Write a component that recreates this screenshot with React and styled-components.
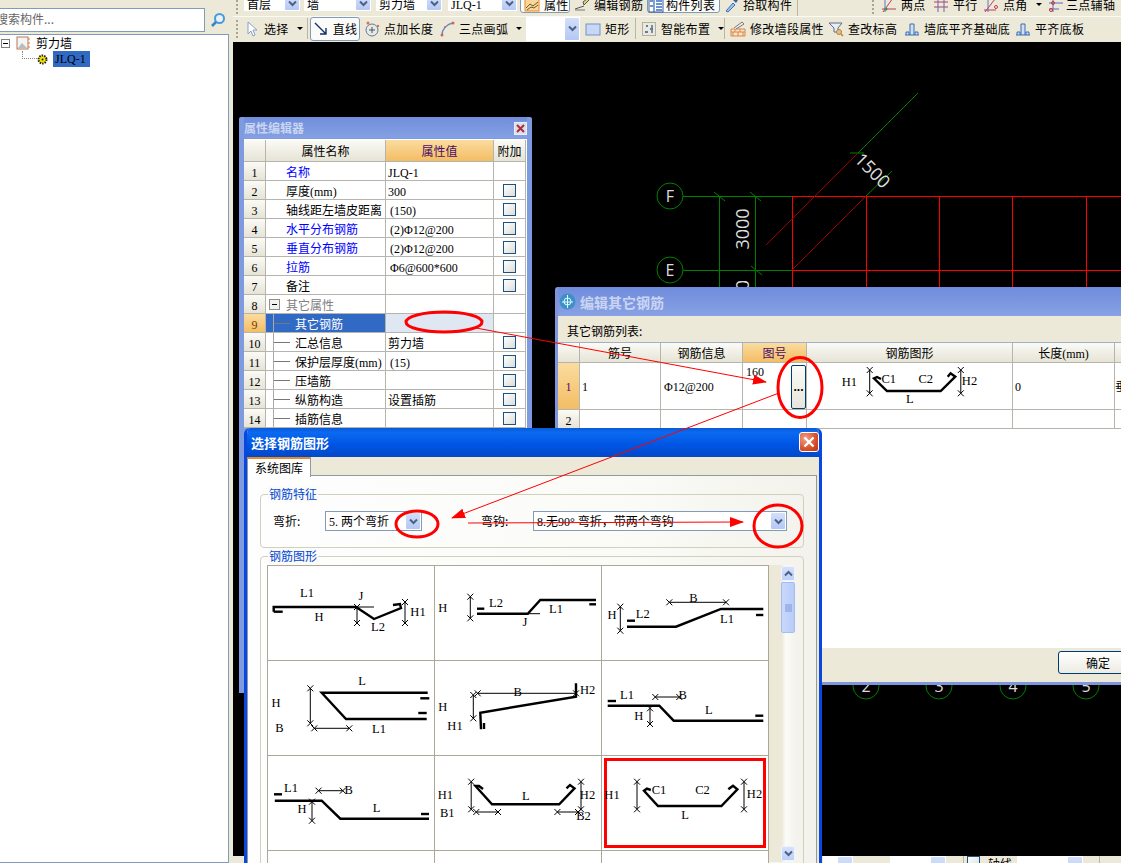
import React from "react";
import styled, { createGlobalStyle } from "styled-components";

const Global = createGlobalStyle`
  html, body { margin: 0; padding: 0; background: #ece9d8; overflow: hidden; }
  * { box-sizing: border-box; }
  #root { width: 1121px; height: 863px; }
`;

const CJK = `"Noto Sans CJK SC", "Liberation Sans", sans-serif`;
const LATIN = `"Liberation Serif", "Noto Sans CJK SC", serif`;

const Page = styled.div`
  position: relative; width: 1121px; height: 863px; overflow: hidden; display: flex;
  background: #ece9d8; font: 12px/16px ${CJK}; color: #000;
`;
const Mono = styled.span`font: 12px/16px ${LATIN};`;

/* ---------- left tree ---------- */
const Side = styled.aside`
  width: 233px; flex: none; display: flex; flex-direction: column; padding: 0 4px 0 0; background: #ece9d8;
`;
const SideTop = styled.div`height: 8px; flex: none;`;
const SearchRow = styled.div`height: 26px; flex: none; display: flex; gap: 2px;`;
const SearchBox = styled.div`
  width: 205px; height: 24px; background: #fff; border: 1px solid #7f9db9; border-left: 0;
  color: #666; font-size: 12px; line-height: 19px; white-space: nowrap; overflow: hidden; text-indent: -4px;
`;
const SearchBtn = styled.div`width: 22px; height: 24px; display: flex; align-items: center; justify-content: center;`;
const Tree = styled.div`flex: 1; background: #fff; border: 1px solid #7f9db9; border-left: 0;`;
const TreeRow = styled.div`display: flex; align-items: center; height: 16px; padding-left: ${p => p.$pad}px; gap: ${p => p.$gap}px;`;
const Minus = styled.span`
  width: 9px; height: 9px; border: 1px solid #7f7f7f; background: #fff; position: relative; flex: none;
  &::after { content: ""; position: absolute; left: 1px; right: 1px; top: 3px; height: 1px; background: #000; }
`;
const Dotted = styled.span`
  flex: none; width: 15px; height: 8px; margin-top: -8px; border-left: 1px dotted #888; border-bottom: 1px dotted #888;
`;
const TreeSel = styled.span`background: #316ac5; width: 37px; height: 16px; padding-left: 2px; margin-left: 5px; font: 12px/16px ${LATIN}; color: #000;`;

/* ---------- workspace ---------- */
const Work = styled.main`flex: 1; display: flex; flex-direction: column; min-width: 0;`;
const Bar = styled.div`
  flex: none; height: ${p => p.$h}px; display: flex; align-items: ${p => p.$align}; overflow: hidden; background: #ece9d8;
  padding-bottom: ${p => p.$pb || 0}px;
  border-bottom: ${p => (p.$line ? "1px solid #fbfaf4" : "0")};
`;
const Grip = styled.span`
  flex: none; width: 2px; height: 18px; margin-left: ${p => p.$ml}px;
  background: repeating-linear-gradient(to bottom, #a8a593 0 2px, transparent 2px 4px);
`;
const Sep = styled.span`flex: none; width: 1px; height: 21px; background: #b9b6a4; margin-left: ${p => p.$ml}px;`;
const ComboTop = styled.div`
  flex: none; width: ${p => p.$w}px; margin-left: ${p => p.$ml}px; margin-top: ${p => p.$mt || 0}px; height: ${p => p.$h || 24}px; background: #fff; position: relative;
  padding-left: 3px; line-height: ${p => p.$h || 24}px; white-space: nowrap; overflow: hidden;
`;
const Arrow = styled.span`
  position: absolute; right: 1px; top: 1px; bottom: 1px; width: 14px; background: linear-gradient(#d2dffb, #b4c8f4);
  display: flex; align-items: center; justify-content: center; border-radius: 1px;
`;
const Tool = styled.div`
  flex: none; width: ${p => p.$w}px; margin-left: ${p => p.$ml}px; margin-top: ${p => p.$mt || 0}px; height: ${p => p.$h || 24}px; display: flex; align-items: center;
  padding-left: ${p => p.$pl || 0}px;
  justify-content: ${p => (p.$center ? "center" : "flex-start")};
  gap: ${p => (p.$gap === undefined ? 4 : p.$gap)}px; white-space: nowrap; font-size: 12px; letter-spacing: 0.3px;
  ${p => p.$on && "background: #fbfbf9; border: 1px solid #7f9db9; border-radius: 3px;"}
`;
const Drop = styled.span`width: 0; height: 0; border: 3px solid transparent; border-top: 3px solid #000; border-bottom: 0; margin-left: 4px;`;
const Canvas = styled.div`flex: 1; min-height: 0; background: #000;`;
const CanvasSvg = styled.svg`display: block; width: 100%; height: 100%;`;
const Check = styled.span`
  display: block; flex: none; width: 13px; height: 13px; border: 1px solid #1c5180; background: linear-gradient(135deg, #fff, #dcdcd7);
  margin-left: ${p => p.$ml || 0}px;
`;
const BottomLabel = styled.span`flex: none; width: 37px; padding-left: 8px; line-height: 16px; white-space: nowrap;`;

/* ---------- windows ---------- */
const Win = styled.section`
  position: absolute; left: ${p => p.$x}px; top: ${p => p.$y}px; width: ${p => p.$w}px; height: ${p => p.$h}px;
  z-index: ${p => p.$z}; overflow: hidden; display: flex; flex-direction: column;
  background: ${p => p.$bg}; border: ${p => p.$bw}px solid ${p => p.$bc}; border-top: 0;
  border-radius: ${p => p.$r}px ${p => p.$r}px 0 0;
`;
const Title = styled.header`
  flex: none; height: ${p => p.$h}px; background: ${p => p.$bg}; color: ${p => p.$c}; display: flex; align-items: center;
  font: bold ${p => p.$fs}px/20px ${CJK}; gap: 4px; padding-left: ${p => p.$pad}px; position: relative;
`;
const MiniClose = styled.span`
  position: absolute; right: 0; top: 5px; width: 13px; height: 13px; background: #d8def4; border: 1px solid #eee;
  display: flex; align-items: center; justify-content: center;
`;
const XpClose = styled.span`
  position: absolute; right: 0; top: 4px; width: 20px; height: 20px; border-radius: 3px; border: 1px solid #fff;
  background: radial-gradient(circle at 30% 30%, #f0a08a, #d8502a 60%, #b93410); display: flex; align-items: center; justify-content: center;
`;

/* property table */
const PropTable = styled.div`background: #fff; border-top: 1px solid #fff; margin-top: 1px;`;
const PropRow = styled.div`display: grid; grid-template-columns: 22px 120px 108px 32px; height: ${p => p.$h}px;`;
const Cell = styled.div`
  border-right: 1px solid #b5b5ad; border-bottom: 1px solid #b5b5ad; padding-left: ${p => p.$pad || 0}px; line-height: ${p => p.$lh || 20}px;
  white-space: nowrap; overflow: hidden; position: relative; color: ${p => p.$c || "#000"}; background: ${p => p.$bg || "#fff"};
  text-align: ${p => p.$align || "left"}; display: ${p => (p.$flex ? "flex" : "block")}; align-items: center; justify-content: center;
`;
const headBg = "linear-gradient(#fbfaf5, #e6e4d6)";
const selBg = "linear-gradient(#fbdc9f, #f3bd64)";
const TreeMark = styled.span`
  position: absolute; left: 7px; top: 0; height: 100%; width: 19px;
  border-left: 1px solid #a9a9a9;
  &::after { content: ""; position: absolute; left: 0; top: 9px; width: 16px; height: 1px; background: #777; }
`;
const GroupMinus = styled.span`
  position: absolute; left: 3px; top: 4px; width: 11px; height: 11px; border: 1px solid #8f8f8f; background: #f2f2ec;
  &::after { content: ""; position: absolute; left: 2px; right: 2px; top: 4px; height: 1px; background: #000; }
`;

/* edit window */
const EditHead = styled.div`flex: none; height: 27px; background: #ece9d8; padding-left: 9px; line-height: 29px; border-bottom: 1px solid #9fb2cc;`;
const EditBody = styled.div`flex: 1; background: #fff; min-height: 0;`;
const EditRow = styled.div`display: grid; grid-template-columns: 22px 81px 82px 64px 206px 102px 60px; height: ${p => p.$h}px;`;
const EditFoot = styled.div`flex: none; height: 34px; background: #ece9d8; padding: 3px 0 0 500px;`;
const OkBtn = styled.div`
  width: 80px; height: 23px; border: 1px solid #003c74; border-radius: 3px; text-align: center; line-height: 21px;
  background: linear-gradient(#fff, #ecebe3);
`;
const DotsBtn = styled.div`
  position: absolute; left: 48px; top: 2px; width: 15px; height: 44px; border: 1px solid #003c74; border-radius: 2px;
  background: linear-gradient(#fbfbf8, #e7e5da); display: flex; align-items: center; justify-content: center; font: bold 12px/12px "Liberation Sans", sans-serif;
`;
const Corner = styled.span`position: absolute; left: 3px; top: 0; font: 12px/18px ${LATIN};`;

/* select window */
const TabStrip = styled.div`flex: none; height: 19px; background: #ece9d8; display: flex; margin-bottom: -1px;`;
const Tab = styled.div`
  width: 64px; height: 20px; background: #fff; border: 1px solid #919b9c; border-bottom: 0; border-top: 2px solid #e68b2c; text-align: center; line-height: 17px; position: relative; z-index: 1;
`;
const TabPanel = styled.div`
  flex: 1; min-height: 0; margin-right: 2px; border: 1px solid #919b9c; background: linear-gradient(to right, #fefeff, #fafaf6 70%, #f3f2ec);
  padding: 18px 12px 0; overflow: hidden;
`;
const Group = styled.div`
  position: relative; border: 1px solid #d0d0bf; border-radius: 4px; height: ${p => p.$h}px; margin-bottom: 8px;
  padding: ${p => p.$pad};
`;
const Legend = styled.span`position: absolute; left: 7px; top: -9px; color: #0046d5; padding: 0 1px; background: #fbfbf8; line-height: 16px;`;
const FeatureRow = styled.div`display: flex; align-items: center;`;
const FieldLabel = styled.span`flex: none; width: ${p => p.$w}px;`;
const Combo = styled.div`
  flex: none; position: relative; width: ${p => p.$w}px; height: 20px; border: 1px solid #7f9db9; background: #fff; padding-left: 3px; line-height: 18px; white-space: pre; margin-right: ${p => p.$mr}px;
`;
const ListArea = styled.div`display: flex; margin-left: 6px; align-items: flex-start;`;
const ShapeGrid = styled.div`
  flex: none; display: grid; grid-template-columns: repeat(3, 167px); grid-auto-rows: 95px; width: 502px; background: #fff;
  border-left: 1px solid #aca899; border-top: 1px solid #aca899;
`;
const ShapeCell = styled.div`
  height: 95px; border-right: 1px solid #aca899; border-bottom: 1px solid #aca899; background: #fff; position: relative;
  ${p => p.$sel && "box-shadow: inset 0 0 0 2px #fff, inset 0 0 0 5px #f00;"}
`;
const Scroll = styled.div`
  flex: none; width: 28px; height: 297px; background: linear-gradient(to right, #ece9d8 45%, #fbfbf8 60%, #f3f2ec);
  position: relative; display: flex; flex-direction: column; align-items: flex-end; padding: 1px 2px 0 0;
`;
const ScrollBtn = styled.div`
  width: 14px; height: 15px; background: linear-gradient(#d6e2fc, #bccffa); border: 1px solid #eef3fe; border-radius: 2px;
  display: flex; align-items: center; justify-content: center; margin-top: ${p => p.$mt || 0}px; flex: none;
`;
const Thumb = styled.div`
  width: 14px; height: 51px; margin-top: 1px; background: linear-gradient(to right, #c9d8fc, #b8ccf8); border: 1px solid #a4bdf0; border-radius: 2px; flex: none;
  display: flex; align-items: center; justify-content: center;
`;
const Overlay = styled.svg`position: absolute; left: 0; top: 0; width: 1121px; height: 863px; z-index: 10; pointer-events: none;`;
const ShapeSvg = styled.svg`position: absolute; left: 0; top: 0; display: block;`;

/* ---------- small drawings ---------- */
const I = ({ children, s = 16 }) => <svg width={s} height={s} viewBox="0 0 16 16" fill="none" style={{ flex: "none" }}>{children}</svg>;
const Chev = ({ up }) => (
  <svg width="9" height="7" viewBox="0 0 9 7"><path d={up ? "M1 5.5 4.5 2 8 5.5" : "M1 1.5 4.5 5 8 1.5"} fill="none" stroke="#4d6185" strokeWidth="2" /></svg>
);
const Icons = {
  attr: <I><rect x="1" y="2" width="14" height="12" fill="#fbd79a" stroke="#e58a2e" /><path d="M2 11l4-4 3 2 5-4M3 13l4-3 3 1 4-3" stroke="#6b5a2a" /></I>,
  rebar: <I><path d="M1 12l9-3M9 5l4-3 2 1-5 5z" stroke="#555" fill="#e8d57a" /><path d="M1 13h10" stroke="#777" /></I>,
  list: <I><rect x="1" y="1" width="14" height="14" fill="#fff" stroke="#3c5d9c" /><path d="M6 1v14M8 4h6M8 7h6M8 10h6M8 13h6M2 4h3M2 9h3" stroke="#3c6cc4" strokeWidth="1.3" /></I>,
  pick: <I><path d="M3 14l7-8 2 2-7 7z" fill="#9cc4f0" stroke="#3c6cb4" /><path d="M10 3l3 3 2-3-2-2z" fill="#3c5d9c" /></I>,
  two: <I><path d="M1 12h14M12 1L2 15" stroke="#c0395a" /><path d="M4 3v12" stroke="#5a7ac0" /><circle cx="5" cy="12" r="1.5" fill="#3a9a3a" /></I>,
  para: <I><path d="M1 5h14M1 10h14" stroke="#c0395a" /><path d="M5 1v14M11 1v14" stroke="#5a6ac0" /></I>,
  angle: <I><path d="M1 13h12M12 2L2 15" stroke="#c0395a" /><path d="M5 3v12" stroke="#5a7ac0" /><circle cx="13" cy="10" r="1.5" stroke="#c0395a" /></I>,
  three: <I><path d="M5 1v14M1 6h14M1 12h10" stroke="#5a6ac0" /><circle cx="3" cy="13" r="1.5" stroke="#d03030" /><circle cx="5" cy="6" r="1.5" stroke="#d03030" /></I>,
  cursor: <I><path d="M4 1v12l3-3 2 5 2-1-2-5h4z" fill="#fff" stroke="#8aa0c8" /></I>,
  line: <I><path d="M2 2l11 11M13 7v6H7" stroke="#10306a" strokeWidth="1.4" /></I>,
  addLen: <I><circle cx="8" cy="9" r="6" stroke="#5a7ab0" /><path d="M8 6v6M5 9h6" stroke="#34548c" /><circle cx="4" cy="2" r="1.5" fill="#e07050" /><circle cx="14" cy="5" r="1.2" fill="#e07050" /></I>,
  arc: <I><path d="M3 14C3 8 8 3 14 2" stroke="#5a8ac8" strokeWidth="1.3" /><circle cx="3" cy="14" r="1.5" fill="#e06050" /><circle cx="14" cy="2" r="1.5" fill="#e06050" /><circle cx="6" cy="6" r="1" fill="#e06050" /></I>,
  rect: <I><rect x="1" y="3" width="14" height="11" fill="#c6d8f6" stroke="#6f94cc" /></I>,
  smart: <I><rect x="1.5" y="1.5" width="13" height="13" stroke="#777" strokeDasharray="1 1" /><path d="M5 5h2M4 11h3M11 4v3M11 9v3M9 8h3" stroke="#2c5a9c" strokeWidth="1.3" /></I>,
  brick: <I><path d="M1 8h14v7H1zM1 11h14M5 8v3M10 8v3M3 11v4M8 11v4M13 11v4" stroke="#d9864a" fill="#fbe3c8" /><path d="M4 7l8-6 2 2-8 5" stroke="#777" fill="#eee" /></I>,
  level: <I><path d="M1 2h13l-4 5v4H6V7z" fill="#e8ecf4" stroke="#5c6c8c" /><circle cx="11" cy="11" r="2.5" fill="#e9c27a" stroke="#b0803a" /><path d="M13 13l2 2" stroke="#b0803a" strokeWidth="1.5" /></I>,
  wall: <I><path d="M1 14h14M2 14v-3h3v3M6 14V3h4v11M11 14v-3h3v3" stroke="#3c6cb4" fill="#cfe0f6" /></I>,
  gear: <svg width="11" height="11" viewBox="0 0 11 11" style={{ flex: "none" }}><circle cx="5.5" cy="5.5" r="4" fill="#f4e300" stroke="#222" strokeDasharray="1.5 1" strokeWidth="2" /><circle cx="5.5" cy="5.5" r="1" fill="#222" /></svg>,
  wallNode: <svg width="14" height="14" viewBox="0 0 14 14" style={{ flex: "none" }}><rect x="1" y="1" width="11" height="12" fill="#f4f4f4" stroke="#b07a5a" /><path d="M2 12l4-5 5 5z" fill="#bbb" /><path d="M13 2v10" stroke="#e8781e" strokeDasharray="2 2" /></svg>,
  search: <svg width="16" height="16" viewBox="0 0 16 16"><circle cx="9.5" cy="6.5" r="4.5" fill="#e8f2fc" stroke="#4a9ad8" strokeWidth="2" /><path d="M6 10l-4 4" stroke="#2f86c8" strokeWidth="2.5" /></svg>,
};

const topA = [
  { w: 56, ml: 6, t: "首层" }, { w: 67, ml: 4, t: "墙" }, { w: 66, ml: 5, t: "剪力墙" }, { w: 69, ml: 6, t: <Mono>JLQ-1</Mono> },
];
const topB = [
  { w: 50, ml: 3, pl: 3, i: "attr", t: "属性", on: true }, { w: 73, ml: 2, pl: 2, i: "rebar", t: "编辑钢筋" },
  { w: 73, ml: 2, gap: 2, i: "list", t: "构件列表", on: true }, { w: 70, ml: 2, pl: 1, i: "pick", t: "拾取构件" },
];
const topC = [
  { w: 47, ml: 7, i: "two", t: "两点" }, { w: 47, ml: 5, i: "para", t: "平行" },
  { w: 62, ml: 3, i: "angle", t: "点角", d: true }, { w: 80, ml: 3, gap: 2, i: "three", t: "三点辅轴" },
];

const props = [
  { n: "名称", v: "JLQ-1", blue: true, noCheck: true, mono: true },
  { n: <>厚度<Mono>(mm)</Mono></>, v: "300", mono: true },
  { n: "轴线距左墙皮距离", v: "(150)", mono: true, ind: 2 },
  { n: "水平分布钢筋", v: "(2)Φ12@200", blue: true, mono: true, ind: 2 },
  { n: "垂直分布钢筋", v: "(2)Φ12@200", blue: true, mono: true, ind: 2 },
  { n: "拉筋", v: "Φ6@600*600", blue: true, mono: true, ind: 2 },
  { n: "备注", v: "" },
  { n: "其它属性", v: "", group: true, noCheck: true },
  { n: "其它钢筋", v: "", child: true, sel: true, noCheck: true },
  { n: "汇总信息", v: "剪力墙", child: true },
  { n: <>保护层厚度<Mono>(mm)</Mono></>, v: "(15)", child: true, mono: true, ind: 2 },
  { n: "压墙筋", v: "", child: true },
  { n: "纵筋构造", v: "设置插筋", child: true },
  { n: "插筋信息", v: "", child: true },
];

const Dim = ({ d }) => {
  const [a, b, c, e] = d;
  const tick = (x, y, k) => <path key={k} d={`M${x - 3} ${y - 3}L${x + 3} ${y + 3}M${x + 3} ${y - 3}L${x - 3} ${y + 3}`} stroke="#000" />;
  return <g><path d={`M${a} ${b}L${c} ${e}`} stroke="#000" />{tick(a, b, 0)}{tick(c, e, 1)}</g>;
};
const Shape = ({ w = 166, h = 94, thick = [], thin = [], dims = [], labels = [] }) => (
  <ShapeSvg width={w} height={h} viewBox={`0 0 ${w} ${h}`}>
    {thick.map((p, i) => <polyline key={i} points={p} fill="none" stroke="#000" strokeWidth="2.4" strokeLinejoin="miter" />)}
    {thin.map((p, i) => <polyline key={i} points={p} fill="none" stroke="#000" />)}
    {dims.map((d, i) => <Dim key={i} d={d} />)}
    {labels.map(([t, x, y], i) => (
      <text key={i} x={x} y={y + 4} textAnchor="middle" fontFamily="Liberation Serif, serif" fontSize="12.5" fill="#000">{t}</text>
    ))}
  </ShapeSvg>
);

const shapes = [
  { thick: ["5.7,45.7 14.7,45.7", "5.7,45.7 5.7,41 88,41 106,53 133,42 132,38 125,39"], thin: ["88,41 106,41"], dims: [[89, 41, 89, 57], [137, 36, 137, 57]],
    labels: [["L1", 39, 27], ["H", 51, 51], ["J", 93, 30], ["L2", 110, 61], ["H1", 150, 46]] },
  { thick: ["42,47.7 92.7,47.7 105.3,34 161,34", "42,42.7 49.3,42.7", "154.3,38.3 161,38.3"], thin: ["92,47.7 105,47.7"], dims: [[35.3, 30.7, 35.3, 52.3]],
    labels: [["H", 7.7, 42.3], ["L2", 61, 36.7], ["J", 90, 56], ["L1", 121, 43]] },
  { thick: ["25,60.7 74,60.7 119,43 161.3,43", "25,54.7 33,54.7", "154,49 161.3,49"], dims: [[18.3, 40.7, 18.3, 64.7], [67.3, 36.3, 124, 36.3]],
    labels: [["H", 10, 49], ["B", 91.3, 32], ["L2", 40.7, 48], ["L1", 125, 53.3]] },
  { thick: ["159.7,31.7 53.7,31.7 78,58 158.7,58", "152.3,37.3 161.3,37.3", "150.3,52 158.7,52"], dims: [[42.3, 27.3, 42.3, 62.3], [46.3, 67.3, 81.3, 67.3]],
    labels: [["H", 8, 42.3], ["B", 11.3, 67.3], ["L", 94, 19.7], ["L1", 111, 68.3]] },
  { thick: ["46,68.3 45.3,51.7 141,35.7 141,22.3", "49,62 49,68"], dims: [[38.3, 34, 38.3, 57.3], [42.7, 32.3, 141, 32.3]],
    labels: [["H2", 152.7, 29], ["B", 82.7, 30.7], ["H", 7.7, 46], ["H1", 20, 65]] },
  { thick: ["5.7,44.7 57.3,44.7 71.7,59.7 161.3,59.7", "5.7,40 14,40", "153.3,54.7 161.3,54.7"], dims: [[53.3, 36, 77.3, 36], [48, 47.3, 48, 63]],
    labels: [["L1", 25, 34], ["B", 80.7, 34], ["H", 36.7, 54.7], ["L", 106.7, 49]] },
  { thick: ["6.8,44.7 53.7,44.7 72.3,62.7 161,62.7", "6,38.3 14,38.3", "153,58 161,58"], dims: [[50.5, 34.7, 74.8, 34.7], [44, 45.7, 44, 64.7]],
    labels: [["L1", 23, 32.3], ["B", 80.6, 34], ["H", 34, 53], ["L", 108.6, 52.3]] },
  { thick: ["48,33 44,30 40.5,30 57,48.3 124.2,48.3 139.5,32.3 135,29 131.5,32.3"], dims: [[36.2, 25.7, 36.2, 53.3], [41.3, 56, 63, 56], [122.4, 56, 143, 56], [146, 25.7, 146, 53.3]],
    labels: [["H1", 10.4, 39.3], ["B1", 12.2, 57.3], ["L", 90.7, 39.7], ["H2", 152.5, 39.3], ["B2", 148.5, 60]] },
  { sel: true, thick: ["48.8,34 44.9,32.7 42,34.7 56,50 119.4,50 135.4,33.3 131,29.7 126.3,33.3"], dims: [[35, 25.7, 35, 53.3], [142, 25.7, 142, 53.3]],
    labels: [["H1", 10, 39], ["C1", 57, 34], ["C2", 100.5, 34], ["L", 83, 59], ["H2", 152.5, 38]] },
  {}, {}, {},
];

const Axis = ({ x, y, t }) => (
  <g>
    <circle cx={x} cy={y} r="13" fill="none" stroke="#008000" />
    <text x={x} y={y + 6} textAnchor="middle" fontFamily="Open Sans, sans-serif" fontSize="16" fill="#ddd">{t}</text>
  </g>
);

export default function App() {
  return (
    <Page>
      <Global />
      <Side>
        <SideTop />
        <SearchRow>
          <SearchBox>搜索构件...</SearchBox>
          <SearchBtn>{Icons.search}</SearchBtn>
        </SearchRow>
        <Tree>
          <TreeRow $pad={1} $gap={6}><Minus />{Icons.wallNode}<span>剪力墙</span></TreeRow>
          <TreeRow $pad={22} $gap={0}><Dotted />{Icons.gear}<TreeSel>JLQ-1</TreeSel></TreeRow>
        </Tree>
      </Side>

      <Work>
        <Bar $h={17} $align="flex-start" $line>
          <Grip $ml={3} />
          {topA.map((c, i) => (
            <ComboTop key={i} $w={c.w} $ml={c.ml} $h={15} $mt={-4}>{c.t}<Arrow><Chev /></Arrow></ComboTop>
          ))}
          {topB.map(b => (
            <Tool key={b.t} $w={b.w} $ml={b.ml} $on={b.on} $pl={b.pl} $gap={b.gap} $h={17} $mt={-4}>{Icons[b.i]}{b.t}</Tool>
          ))}
          <Sep $ml={5} />
          <Grip $ml={74} />
          {topC.map(b => (
            <Tool key={b.t} $w={b.w} $ml={b.ml} $gap={b.gap} $h={17} $mt={-4}>{Icons[b.i]}{b.t}{b.d && <Drop />}</Tool>
          ))}
        </Bar>
        <Bar $h={25} $align="center" $pb={2}>
          <Grip $ml={3} />
          <Tool $w={60} $ml={6}>{Icons.cursor}选择<Drop /></Tool>
          <Sep $ml={3} />
          <Tool $w={50} $ml={2} $on $center>{Icons.line}直线</Tool>
          <Tool $w={68} $ml={4}>{Icons.addLen}点加长度</Tool>
          <Tool $w={82} $ml={7}>{Icons.arc}三点画弧<Drop /></Tool>
          <ComboTop $w={54} $ml={5}><Arrow><Chev /></Arrow></ComboTop>
          <Tool $w={44} $ml={5}>{Icons.rect}矩形</Tool>
          <Sep $ml={6} />
          <Tool $w={80} $ml={5}>{Icons.smart}智能布置<Drop /></Tool>
          <Sep $ml={3} />
          <Tool $w={93} $ml={5}>{Icons.brick}修改墙段属性</Tool>
          <Tool $w={70} $ml={5}>{Icons.level}查改标高</Tool>
          <Tool $w={105} $ml={6}>{Icons.wall}墙底平齐基础底</Tool>
          <Tool $w={69} $ml={6}>{Icons.wall}平齐底板</Tool>
        </Bar>
        <Canvas>
          <CanvasSvg viewBox="233 42 888 814" preserveAspectRatio="none">
            <g stroke="#008000" fill="none">
              <path d="M683 196.5H792M683 270.5H792M719.5 196V300M755.5 196V300" />
              <path d="M714 192l11 9M750 192l11 9M751 266l11 9" />
              <path d="M918 93L858 153M892 171L866 196M850 153h14" />
            </g>
            <g stroke="#f00" fill="none">
              <path d="M792 196.5H1121M792 270.5H1121M792.5 196V300M866.5 196V300M939.5 196V300M1012.5 196V300M1086.5 196V300" />
            </g>
            <path d="M866 196L792 270M858 153L766 245" stroke="#a00000" fill="none" />
            <Axis x={670} y={196} t="F" />
            <Axis x={670} y={270} t="E" />
            {[[866, "2"], [939, "3"], [1013, "4"], [1086, "5"]].map(([x, t]) => <Axis key={t} x={x} y={686} t={t} />)}
            <text x="873" y="177" transform="rotate(45 873 170)" textAnchor="middle" fontFamily="Open Sans, sans-serif" fontSize="18" fill="#ddd">1500</text>
            <text x="743" y="235" transform="rotate(-90 743 229)" textAnchor="middle" fontFamily="Open Sans, sans-serif" fontSize="18" fill="#ddd">3000</text>
            <text x="743" y="291" transform="rotate(-90 743 285)" textAnchor="middle" fontFamily="Open Sans, sans-serif" fontSize="18" fill="#ddd">0</text>
          </CanvasSvg>
        </Canvas>
        <Bar $h={7} $align="flex-start">
          <ComboTop $w={30} $ml={590}><Arrow /></ComboTop>
          <ComboTop $w={56} $ml={37}><Arrow /></ComboTop>
          <Sep $ml={17} />
          <Check $ml={3} />
          <BottomLabel>轴线</BottomLabel>
          <ComboTop $w={66} $ml={0}><Arrow /></ComboTop>
          <Sep $ml={16} />
        </Bar>
      </Work>

      <Win $x={239} $y={117} $w={293} $h={576} $z={1} $bw={5} $bc="#7f9be0" $bg="#7f9be0" $r={2}>
        <Title $h={21} $bg="linear-gradient(#6f8edb, #85a0e4)" $c="#c9d5f1" $fs={12} $pad={0}>
          属性编辑器
          <MiniClose><svg width="9" height="9" viewBox="0 0 9 9"><path d="M1 1l7 7M8 1L1 8" stroke="#b03030" strokeWidth="2" /></svg></MiniClose>
        </Title>
        <PropTable>
          <PropRow $h={22}>
            <Cell $bg={headBg} />
            <Cell $bg={headBg} $align="center" $lh={21}>属性名称</Cell>
            <Cell $bg={selBg} $align="center" $c="#4a0d66" $lh={21}>属性值</Cell>
            <Cell $bg={headBg} $align="center" $lh={21}>附加</Cell>
          </PropRow>
          {props.map((r, i) => (
            <PropRow key={i} $h={19}>
              <Cell $bg={r.sel ? selBg : headBg} $align="center" $c={r.sel ? "#7a3a00" : "#000"}><Mono>{i + 1}</Mono></Cell>
              <Cell $pad={r.child ? 29 : 20} $bg={r.sel ? "#316ac5" : "#fff"} $c={r.sel ? "#fff" : r.blue ? "#0000ff" : r.group ? "#808080" : "#000"}>
                {r.group && <GroupMinus />}
                {r.child && <TreeMark />}
                {r.n}
              </Cell>
              <Cell $pad={2 + (r.ind || 0)} $bg={r.sel ? "#dfe7f3" : "#fff"}>{r.mono ? <Mono>{r.v}</Mono> : r.v}</Cell>
              <Cell $flex>{!r.noCheck && <Check />}</Cell>
            </PropRow>
          ))}
        </PropTable>
      </Win>

      <Win $x={555} $y={287} $w={580} $h={398} $z={2} $bw={3} $bc="#7f96dc" $bg="#7f96dc" $r={3}>
        <Title $h={29} $bg="linear-gradient(#6f8bdc, #89a2e4)" $c="#c9d5f1" $fs={14} $pad={1}>
          <svg width="17" height="17" viewBox="0 0 17 17"><circle cx="8.5" cy="8.5" r="8" fill="#3f8fc8" /><path d="M8.5 2v13M3 9h11" stroke="#dff" /><circle cx="8.5" cy="8.5" r="3.5" fill="none" stroke="#dff" /></svg>
          编辑其它钢筋
        </Title>
        <EditHead>其它钢筋列表:</EditHead>
        <EditBody>
          <EditRow $h={20}>
            <Cell $bg={headBg} />
            <Cell $bg={headBg} $align="center">筋号</Cell>
            <Cell $bg={headBg} $align="center">钢筋信息</Cell>
            <Cell $bg={selBg} $align="center" $c="#4a0d66">图号</Cell>
            <Cell $bg={headBg} $align="center">钢筋图形</Cell>
            <Cell $bg={headBg} $align="center">长度<Mono>(mm)</Mono></Cell>
            <Cell $bg={headBg} />
          </EditRow>
          <EditRow $h={47}>
            <Cell $bg={selBg} $align="center" $c="#4a0d66" $lh={46}><Mono>1</Mono></Cell>
            <Cell $pad={2} $lh={46}><Mono>1</Mono></Cell>
            <Cell $pad={3} $lh={46}><Mono>Φ12@200</Mono></Cell>
            <Cell><Corner>160</Corner><DotsBtn>...</DotsBtn></Cell>
            <Cell>
              <Shape w={205} h={46}
                thick={["74,16 70,14 67,15.3 80,28 133.7,28 148.3,13.7 143.6,10.3 140.7,13.7"]}
                dims={[[62.7, 7, 62.7, 30.3], [153.8, 7, 153.8, 30.3]]}
                labels={[["H1", 42.3, 19], ["C1", 81.7, 15.7], ["C2", 118.8, 15.7], ["L", 102.8, 36], ["H2", 162.5, 18]]} />
            </Cell>
            <Cell $pad={2} $lh={46}><Mono>0</Mono></Cell>
            <Cell $lh={46}>垂直筋</Cell>
          </EditRow>
          <EditRow $h={19}>
            <Cell $bg={headBg} $align="center"><Mono>2</Mono></Cell>
            <Cell /><Cell /><Cell /><Cell /><Cell /><Cell />
          </EditRow>
        </EditBody>
        <EditFoot><OkBtn>确定</OkBtn></EditFoot>
      </Win>

      <Win $x={244} $y={428} $w={578} $h={450} $z={3} $bw={3} $bc="#0a46e0" $bg="#ece9d8" $r={6}>
        <Title $h={29} $bg="linear-gradient(#0a5ad8 0%, #0a6af0 15%, #0054e3 60%, #0348c8)" $c="#fff" $fs={13} $pad={4}>
          选择钢筋图形
          <XpClose><svg width="12" height="12" viewBox="0 0 12 12"><path d="M1.5 1.5l9 9M10.5 1.5l-9 9" stroke="#fff" strokeWidth="2.4" /></svg></XpClose>
        </Title>
        <TabStrip><Tab>系统图库</Tab></TabStrip>
        <TabPanel>
          <Group $h={54} $pad="16px 0 0 12px">
            <Legend>钢筋特征</Legend>
            <FeatureRow>
              <FieldLabel $w={52}>弯折:</FieldLabel>
              <Combo $w={97} $mr={59}><Mono>5. </Mono>两个弯折<Arrow><Chev /></Arrow></Combo>
              <FieldLabel $w={52}>弯钩:</FieldLabel>
              <Combo $w={254} $mr={0}><Mono>8.</Mono>无<Mono>90° </Mono>弯折，带两个弯钩<Arrow><Chev /></Arrow></Combo>
            </FeatureRow>
          </Group>
          <Group $h={400} $pad="8px 0 0 0">
            <Legend>钢筋图形</Legend>
            <ListArea>
              <ShapeGrid>
                {shapes.map((s, i) => <ShapeCell key={i} $sel={s.sel}><Shape {...s} /></ShapeCell>)}
              </ShapeGrid>
              <Scroll>
                <ScrollBtn><Chev up /></ScrollBtn>
                <Thumb>
                  <svg width="7" height="8" viewBox="0 0 7 8"><path d="M0 1h7M0 3h7M0 5h7M0 7h7" stroke="#7d98d4" /></svg>
                </Thumb>
                <ScrollBtn $mt={213}><Chev /></ScrollBtn>
              </Scroll>
            </ListArea>
          </Group>
        </TabPanel>
      </Win>

      <Overlay viewBox="0 0 1121 863">
        <defs>
          <marker id="head" markerWidth="14" markerHeight="10" refX="13" refY="5" orient="auto" markerUnits="userSpaceOnUse">
            <path d="M0 0L14 5 0 10z" fill="#f00" />
          </marker>
        </defs>
        <g fill="none" stroke="#f00">
          <line x1="476" y1="328" x2="766" y2="382" markerEnd="url(#head)" />
          <line x1="779" y1="393" x2="452" y2="518" markerEnd="url(#head)" />
          <line x1="468" y1="523" x2="743" y2="522" markerEnd="url(#head)" />
          <g strokeWidth="3">
            <ellipse cx="444" cy="322" rx="38" ry="10" />
            <ellipse cx="800" cy="387.5" rx="22" ry="30" />
            <ellipse cx="417" cy="524" rx="21" ry="13" />
            <ellipse cx="778" cy="526" rx="24" ry="21" />
          </g>
        </g>
      </Overlay>
    </Page>
  );
}
